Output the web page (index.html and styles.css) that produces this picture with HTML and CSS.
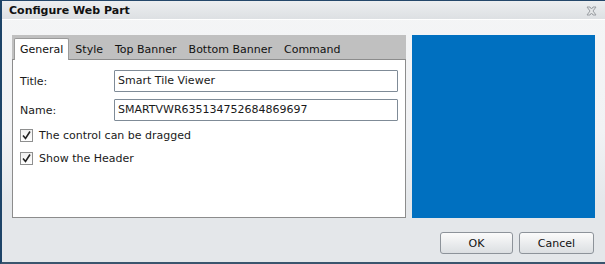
FILE: index.html
```html
<!DOCTYPE html>
<html lang="en">
<head>
  <meta charset="UTF-8" />
  <title>Configure Web Part</title>
  <link rel="stylesheet" href="styles.css">
</head>
<body>

<div class="dialog">
  <div class="titlebar">
    <span class="title">Configure Web Part</span>
    <svg class="close" width="11" height="10" viewBox="0 0 11 10">
      <path d="M1 1h3l1.5 2 1.5-2h3l-3 4 3 4h-3l-1.5-2-1.5 2h-3l3-4z" fill="#e4e6e8" stroke="#9a9ea3" stroke-width="1"/>
    </svg>
  </div>

  <div class="content">
    <div class="main">
      <div class="tabpanel">
        <div class="tabs">
          <span class="tab active">General</span>
          <span class="tab">Style</span>
          <span class="tab">Top Banner</span>
          <span class="tab">Bottom Banner</span>
          <span class="tab">Command</span>
        </div>
        <div class="tabbody">
          <div class="field">
            <label>Title:</label>
            <div class="input">Smart Tile Viewer</div>
          </div>
          <div class="field">
            <label>Name:</label>
            <div class="input">SMARTVWR635134752684869697</div>
          </div>
          <div class="check">
            <span class="box"><svg width="11" height="11" viewBox="0 0 11 11"><path d="M2 5.5l2.5 3L9 1.5" fill="none" stroke="#222" stroke-width="1.6"/></svg></span>
            The control can be dragged
          </div>
          <div class="check">
            <span class="box"><svg width="11" height="11" viewBox="0 0 11 11"><path d="M2 5.5l2.5 3L9 1.5" fill="none" stroke="#222" stroke-width="1.6"/></svg></span>
            Show the Header
          </div>
        </div>
      </div>
      <div class="preview"></div>
    </div>

    <div class="actions">
      <button>OK</button>
      <button>Cancel</button>
    </div>
  </div>
</div>

</body>
</html>
```

FILE: styles.css
```css
body {
  margin: 0;
  font-family: "DejaVu Sans", Verdana, sans-serif;
  font-size: 11px;
  color: #1a1a1a;
  background: #f3f4f6;
}
.dialog {
  width: 603px;
  height: 261px;
  border-left: 2px solid #1d4468;
  border-top: 1px solid #24476a;
  border-bottom: 2px solid #3a556e;
  background: linear-gradient(#f4f5f6, #f1f2f4 50%, #e4e7ea 78%, #e4e7ea);
  display: flex;
  flex-direction: column;
}
.titlebar {
  height: 18px;
  display: flex;
  align-items: center;
  justify-content: space-between;
  padding: 0 8px 0 7px;
  background: linear-gradient(#eceef0, #dde0e3);
  border-bottom: 1px solid #ffffff;
}
.title {
  font-weight: bold;
  font-size: 11px;
  color: #111;
}
.close {
  margin-top: 1px;
}
.content {
  padding: 15px 10px 0 10px;
}
.main {
  display: flex;
  gap: 6px;
  height: 183px;
}
.tabpanel {
  width: 395px;
  background: #c0c0c0;
  display: flex;
  flex-direction: column;
}
.tabs {
  height: 25px;
  display: flex;
  align-items: flex-end;
  padding-left: 2px;
  border-bottom: 1px solid #8c8c8c;
  box-sizing: border-box;
}
.tab {
  padding: 0 7px 3px 5px;
  line-height: 13px;
  color: #111;
}
.tab.active {
  background: #fff;
  border: 1px solid #9a9a9a;
  border-bottom: none;
  border-radius: 2px 2px 0 0;
  padding: 4px 5px 4px 5px;
  margin-right: 1px;
  margin-bottom: -1px;
  position: relative;
}
.tabbody {
  flex: 1;
  background: #fff;
  border: 1px solid #8c8c8c;
  border-top: none;
  padding: 10px 0 0 7px;
}
.field {
  display: flex;
  align-items: center;
  height: 22px;
  margin-bottom: 7px;
}
.field label {
  width: 94px;
}
.input {
  width: 279px;
  height: 20px;
  line-height: 20px;
  border: 1px solid #7f8b97;
  border-radius: 1px;
  padding-left: 3px;
  box-sizing: content-box;
}
.check {
  display: flex;
  align-items: center;
  gap: 6px;
  height: 15px;
  margin-bottom: 8px;
}
.box {
  width: 11px;
  height: 11px;
  border: 1px solid #8e8f8f;
  background: linear-gradient(#f0f0f0, #ffffff);
  display: flex;
}
.preview {
  width: 183px;
  background: #0070c0;
}
.actions {
  display: flex;
  justify-content: flex-end;
  gap: 6px;
  margin-top: 14px;
  padding-right: 1px;
}
.actions button {
  font-family: inherit;
  font-size: 11px;
  color: #111;
  width: 73px;
  height: 22px;
  border: 1px solid #8d939a;
  border-radius: 3px;
  background: linear-gradient(#fbfbfb, #e8eaec 60%, #dcdfe2);
}
.actions button + button {
  width: 75px;
}
```
